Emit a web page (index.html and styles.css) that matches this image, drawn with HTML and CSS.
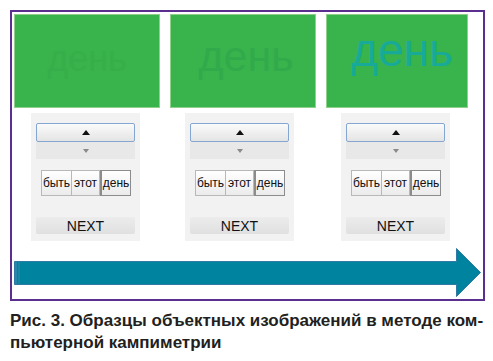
FILE: index.html
```html
<!DOCTYPE html>
<html lang="ru">

<head>
  <meta charset="UTF-8">
  <link rel="stylesheet" href="styles.css">
</head>

<body>
  <div class="figure">
    <div class="frame">
      <div class="columns">

        <!-- Sample 1: word almost invisible -->
        <div class="column">
          <div class="stimulus stimulus-faint"><span>день</span></div>
          <div class="panel">
            <button class="step step-up" type="button"><i class="tri-up"></i></button>
            <button class="step step-down" type="button"><i class="tri-down"></i></button>
            <div class="words">
              <button class="word word-wide" type="button">быть</button>
              <button class="word" type="button">этот</button>
              <button class="word word-wide word-active" type="button">день</button>
            </div>
            <button class="next" type="button">NEXT</button>
          </div>
        </div>

        <!-- Sample 2: word slightly darker -->
        <div class="column">
          <div class="stimulus stimulus-dim"><span>день</span></div>
          <div class="panel">
            <button class="step step-up" type="button"><i class="tri-up"></i></button>
            <button class="step step-down" type="button"><i class="tri-down"></i></button>
            <div class="words">
              <button class="word word-wide" type="button">быть</button>
              <button class="word" type="button">этот</button>
              <button class="word word-wide word-active" type="button">день</button>
            </div>
            <button class="next" type="button">NEXT</button>
          </div>
        </div>

        <!-- Sample 3: word clearly visible -->
        <div class="column">
          <div class="stimulus stimulus-clear"><span>день</span></div>
          <div class="panel">
            <button class="step step-up" type="button"><i class="tri-up"></i></button>
            <button class="step step-down" type="button"><i class="tri-down"></i></button>
            <div class="words">
              <button class="word word-wide" type="button">быть</button>
              <button class="word" type="button">этот</button>
              <button class="word word-wide word-active" type="button">день</button>
            </div>
            <button class="next" type="button">NEXT</button>
          </div>
        </div>

      </div>

      <!-- Time arrow -->
      <svg class="arrow" width="467" height="49" viewBox="0 0 467 49">
        <polygon points="0.5,13.5 442.5,13.5 442.5,0.5 466.5,24.5 442.5,48.5 442.5,36.5 0.5,36.5" fill="#00839f" stroke="#2f7aa3" stroke-width="1"/>
        <line x1="2" y1="14" x2="2" y2="36" stroke="#4a90b5" stroke-width="1"/>
        <line x1="5" y1="14" x2="5" y2="36" stroke="#3b86ad" stroke-width="1"/>
      </svg>
    </div>

    <p class="caption">Рис. 3. Образцы объектных изображений в методе ком-<br>пьютерной кампиметрии</p>
  </div>
</body>

</html>
```

FILE: styles.css
```css
    body, html {
      margin: 0;
      padding: 0;
      background-color: #ffffff;
      font-family: "Liberation Sans", Arial, sans-serif;
    }

    .figure {
      padding: 10px 0 0 10px;
    }

    .frame {
      width: 475px;
      box-sizing: border-box;
      border: 2px solid #5b2f8f;
      padding: 2px 0 2px 2px;
    }

    .columns {
      display: flex;
      gap: 10px;
    }

    .column {
      width: 146px;
    }

    .column:last-child {
      width: 142px;
    }

    /* Green stimulus field */
    .stimulus {
      height: 94px;
      box-sizing: border-box;
      background-color: #39b34b;
      border: 1px solid #8fd08a;
      display: flex;
      align-items: center;
      justify-content: center;
      line-height: 1;
    }

    .stimulus-faint {
      font-size: 36px;
      color: #36af4a;
      padding-bottom: 4px;
    }

    .stimulus-dim {
      font-size: 43px;
      color: #31aa4c;
      padding: 0 0 10px 6px;
    }

    .stimulus-clear {
      font-size: 46px;
      color: #17aa99;
      padding: 0 0 22px 10px;
    }

    /* Control panel */
    .panel {
      width: 109px;
      margin: 5px 0 0 15px;
      padding: 10px 5px 7px;
      box-sizing: border-box;
      background-color: #f2f2f2;
      display: flex;
      flex-direction: column;
    }

    .column:first-child .panel {
      margin-left: 17px;
    }

    button {
      font-family: "Liberation Sans", Arial, sans-serif;
      margin: 0;
      padding: 0;
      cursor: pointer;
      color: #111111;
    }

    .step {
      display: flex;
      align-items: center;
      justify-content: center;
      width: 100%;
    }

    .step-up {
      height: 19px;
      border: 1px solid #86a6d2;
      border-radius: 2px;
      background: linear-gradient(#fbfbfb, #e4e4e4);
    }

    .step-down {
      height: 17px;
      border: none;
      background-color: #e8e8e8;
    }

    .tri-up {
      width: 0;
      height: 0;
      border-left: 4px solid transparent;
      border-right: 4px solid transparent;
      border-bottom: 5px solid #111111;
    }

    .tri-down {
      width: 0;
      height: 0;
      border-left: 3px solid transparent;
      border-right: 3px solid transparent;
      border-top: 4px solid #8a8a8a;
    }

    .words {
      display: flex;
      margin: 11px 0 0 5px;
      height: 26px;
    }

    .word {
      width: 28px;
      height: 26px;
      font-size: 12px;
      border: 1px solid #b8b8b8;
      background: linear-gradient(#ffffff, #ebebeb);
    }

    .word-wide {
      width: 31px;
    }

    .word + .word {
      border-left: none;
    }

    .word-active {
      border: 1px solid #8c8c8c;
      border-left: 2px solid #8c8c8c !important;
    }

    .next {
      margin-top: 21px;
      height: 17px;
      width: 100%;
      font-size: 14px;
      border: none;
      border-radius: 2px;
      background: linear-gradient(#ececec, #e0e0e0);
    }

    .arrow {
      display: block;
      margin-top: 7px;
    }

    .caption {
      margin: 9px 0 0 0;
      font-size: 17px;
      font-weight: bold;
      line-height: 22px;
      color: #231f20;
    }
```
